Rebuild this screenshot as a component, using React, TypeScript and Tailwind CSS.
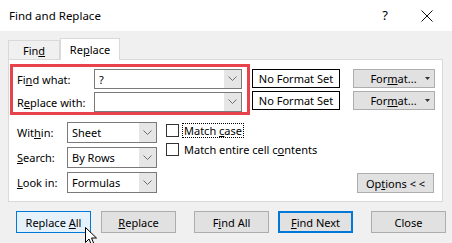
import type { ReactNode } from "react";

const font = { fontFamily: '"Noto Sans", "Open Sans", sans-serif' };

function Chevron() {
  return (
    <svg width="9" height="6" viewBox="0 0 9 6" className="block">
      <path d="M0.5 0.5 L4.5 4.5 L8.5 0.5" fill="none" stroke="#6d6d6d" strokeWidth="1" />
    </svg>
  );
}

function Combo({ value, width, height = 20 }: { value: string; width: number; height?: number }) {
  return (
    <div
      className="flex border border-[#7a7a7a] bg-white"
      style={{ width, height }}
    >
      <div className="flex-1 flex items-center pl-[4px] text-[11px] leading-none text-black">{value}</div>
      <div className="w-[17px] bg-[#e6e6e6] flex items-center justify-center">
        <Chevron />
      </div>
    </div>
  );
}

function Btn({
  children,
  className = "",
}: {
  children: ReactNode;
  className?: string;
}) {
  return (
    <div
      className={`h-[22px] w-[75px] flex items-center justify-center text-[11px] leading-none text-black ${className}`}
    >
      {children}
    </div>
  );
}

function Check({ children, focus }: { children: ReactNode; focus?: boolean }) {
  return (
    <div className="flex items-center h-[13px]">
      <div className="w-[13px] h-[13px] border border-[#333] bg-white" />
      <span
        className={`ml-[4px] text-[11px] leading-none text-black px-[1px] py-[1px] ${
          focus ? "outline outline-1 outline-dotted outline-black" : ""
        }`}
      >
        {children}
      </span>
    </div>
  );
}

export default function App() {
  return (
    <div className="w-[452px] h-[243px] overflow-hidden bg-[#f0f0f0] relative" style={font}>
      {/* title bar */}
      <div className="h-[31px] bg-white flex items-center pl-[9px] pr-[19px]">
        <span className="text-[11.5px] text-black leading-none">Find and Replace</span>
        <span className="ml-auto text-[13px] text-black leading-none">?</span>
        <svg width="12" height="12" viewBox="0 0 12 12" className="ml-[33px]">
          <path d="M0.5 0.5 L11.5 11.5 M11.5 0.5 L0.5 11.5" stroke="#111" strokeWidth="1" />
        </svg>
      </div>

      <div className="pl-[8px] pt-[7px]">
        {/* tabs */}
        <div className="flex items-end h-[21px] relative z-10">
          <div className="w-[52px] h-[19px] border border-b-0 border-[#d9d9d9] bg-[#f0f0f0] flex items-center justify-center text-[11px] leading-none text-black">
            <span>
              Fin<span className="underline">d</span>
            </span>
          </div>
          <div className="w-[60px] h-[22px] border border-b-0 border-[#d9d9d9] bg-white flex items-center justify-center text-[11px] leading-none text-black -mb-[1px]">
            <span>
              Re<span className="underline">p</span>lace
            </span>
          </div>
        </div>

        {/* panel */}
        <div className="w-[435px] h-[143px] border border-[#d9d9d9] bg-white pl-[1px] pt-[4px]">
          <div className="flex items-start">
            <div className="w-[240px] h-[51px] border-[3px] border-[#e8434b] pl-[4px] pt-[2px] flex flex-col gap-[3px]">
              <div className="flex items-center">
                <span className="w-[77px] text-[11px] leading-none text-black">
                  Fi<span className="underline">n</span>d what:
                </span>
                <Combo value="?" width={148} />
              </div>
              <div className="flex items-center">
                <span className="w-[77px] text-[11px] leading-none text-black">
                  R<span className="underline">e</span>place with:
                </span>
                <Combo value="" width={148} />
              </div>
            </div>
            <div className="ml-[2px] pt-[5px] flex flex-col gap-[3px]">
              {[0, 1].map((i) => (
                <div key={i} className="flex">
                  <div className="w-[88px] h-[19px] border border-black bg-white flex items-center justify-center text-[11px] leading-none text-black">
                    No Format Set
                  </div>
                  <div className="ml-[13px] w-[82px] h-[19px] border border-[#adadad] bg-[#e1e1e1] flex items-center text-[11px] leading-none text-black">
                    <span className="flex-1 text-center pl-[8px]">
                      For<span className="underline">m</span>at...
                    </span>
                    <svg width="5" height="3" viewBox="0 0 5 3" className="mr-[4px]">
                      <path d="M0 0 L5 0 L2.5 3 Z" fill="#333" />
                    </svg>
                  </div>
                </div>
              ))}
            </div>
          </div>

          <div className="flex mt-[7px]">
            <div className="pl-[7px] flex flex-col gap-[4px]">
              {[
                { label: <>Wit<span className="underline">h</span>in:</>, value: "Sheet" },
                { label: <><span className="underline">S</span>earch:</>, value: "By Rows" },
                { label: <><span className="underline">L</span>ook in:</>, value: "Formulas" },
              ].map((r, i) => (
                <div key={i} className="flex items-center">
                  <span className="w-[50px] text-[11px] leading-none text-black">{r.label}</span>
                  <Combo value={r.value} width={90} height={21} />
                </div>
              ))}
            </div>
            <div className="ml-[9px] pt-[2px] flex flex-col gap-[6px]">
              <Check focus>
                Match <span className="underline">c</span>ase
              </Check>
              <Check>
                Match entire cell c<span className="underline">o</span>ntents
              </Check>
            </div>
            <div className="ml-auto mr-[8px] self-end">
              <div className="w-[77px] h-[20px] border border-[#adadad] bg-[#e1e1e1] flex items-center justify-center text-[11px] leading-none text-black">
                <span>
                  Op<span className="underline">t</span>ions &lt; &lt;
                </span>
              </div>
            </div>
          </div>
        </div>

        {/* buttons */}
        <div className="flex mt-[9px] pl-[8px]">
          <Btn className="border border-[#0078d7] bg-[#e5f1fb]">
            <span>
              Replace <span className="underline">A</span>ll
            </span>
          </Btn>
          <Btn className="ml-[10px] border border-[#adadad] bg-[#e1e1e1]">
            <span>
              <span className="underline">R</span>eplace
            </span>
          </Btn>
          <Btn className="ml-[18px] border border-[#adadad] bg-[#e1e1e1]">
            <span>
              F<span className="underline">i</span>nd All
            </span>
          </Btn>
          <Btn className="ml-[9px] border-2 border-[#0078d7] bg-[#e1e1e1]">
            <span>
              <span className="underline">F</span>ind Next
            </span>
          </Btn>
          <Btn className="ml-[18px] border border-[#adadad] bg-[#e1e1e1]">
            <span>Close</span>
          </Btn>
        </div>
      </div>

      {/* mouse cursor */}
      <svg width="14" height="20" viewBox="0 0 14 20" className="absolute left-[85px] top-[227px]">
        <path
          d="M0.5 0.5 L0.5 15.5 L4 12 L6.5 18 L9 17 L6.5 11 L11.5 11 Z"
          fill="#fff"
          stroke="#000"
          strokeWidth="1"
        />
      </svg>
    </div>
  );
}
